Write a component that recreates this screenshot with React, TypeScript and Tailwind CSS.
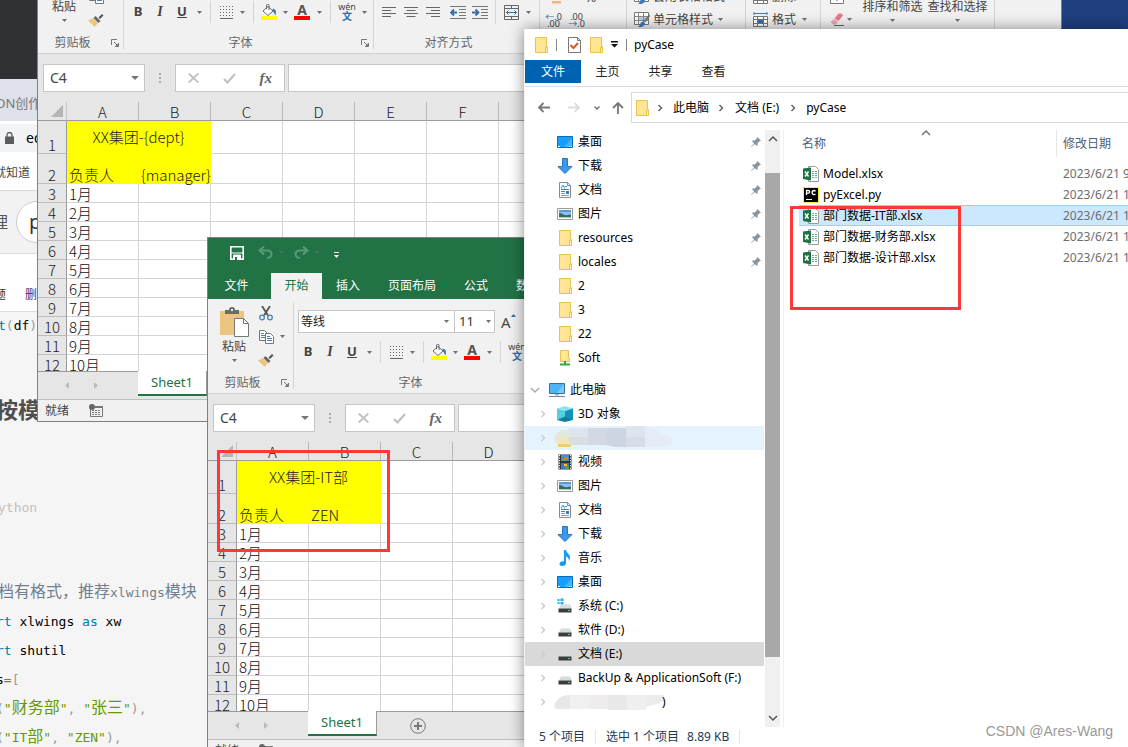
import type { ReactNode } from "react";
import clsx from "clsx";

const UI_FONT = "font-['Noto_Sans','Noto_Sans_CJK_SC',sans-serif]";
const SHEET_FONT = "font-['Noto_Sans_CJK_SC',sans-serif]";
const CODE_FONT = "font-['DejaVu_Sans_Mono','Noto_Sans_CJK_SC',monospace]";

const COLUMNS = ["A", "B", "C", "D", "E", "F", "G", "H", "I", "J", "K", "L", "M", "N"];
const MONTHS = ["1月", "2月", "3月", "4月", "5月", "6月", "7月", "8月", "9月", "10月"];

/* ---------- small shared icons ---------- */

function Caret({ className }: { className?: string }) {
  return (
    <svg width="5" height="3" viewBox="0 0 5 3" className={clsx("shrink-0", className)}>
      <path d="M0 0h5L2.5 3z" fill="#707070" />
    </svg>
  );
}

function FolderIcon() {
  return (
    <svg width="16" height="16" viewBox="0 0 16 16" className="shrink-0">
      <path d="M2.5.5h11v9h1v6h-12z" fill="#ffe594" stroke="#e8c34f" />
      <path d="M12.5 15V10.5h2V15" fill="#fff0b8" stroke="#e8c34f" />
    </svg>
  );
}

function NetFolderIcon() {
  return (
    <svg width="16" height="16" viewBox="0 0 16 16" className="shrink-0">
      <path d="M3.5.5h8v8h1v3h-9z" fill="#ffe594" stroke="#e8c34f" />
      <path d="M8 11v3M3 14.5h10" stroke="#2fae3f" strokeWidth="2" />
    </svg>
  );
}

function DesktopIcon() {
  return (
    <svg width="16" height="16" viewBox="0 0 16 16" className="shrink-0">
      <path d="M.5 2.5h15v11H.5z" fill="#1a9fff" stroke="#0a6ab6" />
      <path d="M7 13l8-9v9z" fill="#45b4ff" />
      <path d="M1 12.5h2M12 12.5h1M14 12.5h1" stroke="#fff" />
    </svg>
  );
}

function DownloadIcon() {
  return (
    <svg width="16" height="16" viewBox="0 0 16 16" className="shrink-0">
      <path d="M5.5.5h5v8h4.500L8 15.500.9 8.500h4.600z" fill="#3b97e8" stroke="#2577c2" />
    </svg>
  );
}

function DocumentIcon() {
  return (
    <svg width="16" height="16" viewBox="0 0 16 16" className="shrink-0">
      <path d="M2.500.5h8l3 3v12h-11z" fill="#fff" stroke="#8c8c8c" />
      <path d="M10.500.5v3h3" fill="none" stroke="#8c8c8c" />
      <path d="M4 6.500l1.500-3h1l1 3M8 4.500h2M4 7.500h8M4 9.500h4" stroke="#2c8bd2" fill="none" />
      <path d="M4 11.500h4M4 13.500h8" stroke="#9a9a9a" />
      <path d="M9 9h3v3H9z" fill="#3d7fb5" />
    </svg>
  );
}

function PictureIcon() {
  return (
    <svg width="16" height="16" viewBox="0 0 16 16" className="shrink-0">
      <path d="M.5 2.500h15v11H.5z" fill="#fff" stroke="#9a9a9a" />
      <path d="M2 4h12v8H2z" fill="#8dc3ee" />
      <path d="M2 4h12v2H2z" fill="#5b97d3" />
      <path d="M2 7c3 0 4 1.500 6 2s4-.5 6-.5V12H2z" fill="#3c6b5e" />
      <path d="M2 11h12v1H2z" fill="#a9cdb8" />
    </svg>
  );
}

function ComputerIcon() {
  return (
    <svg width="16" height="16" viewBox="0 0 16 16" className="shrink-0">
      <path d="M.5 1.500h15v10H.5z" fill="#4db5f5" stroke="#3a6f96" />
      <path d="M8 11l7-9v9z" fill="#7acbfa" />
      <path d="M6 12h4v1.500H6z" fill="#9fb4c4" />
      <path d="M0 14.500h16" stroke="#6f8799" />
    </svg>
  );
}

function CubeIcon() {
  return (
    <svg width="16" height="16" viewBox="0 0 16 16" className="shrink-0">
      <path d="M0 2.500L8 0l8 2.500L8 5z" fill="#8fe3ee" />
      <path d="M0 2.500L8 5v8l-8 1z" fill="#55cfe0" />
      <path d="M16 2.500L8 5v8l8 1z" fill="#1590bd" />
      <path d="M0 14l8-3.500 8 3.500-8 2z" fill="#0f7f9c" />
    </svg>
  );
}

function VideoIcon() {
  return (
    <svg width="16" height="16" viewBox="0 0 16 16" className="shrink-0">
      <path d="M1.500.5h13v15h-13z" fill="#333" />
      <path d="M2.500 1v14M13.500 1v14" stroke="#fff" strokeDasharray="1.200 1.300" />
      <path d="M4 1h8v6H4z" fill="#4f86dd" />
      <path d="M4 9h8v6H4z" fill="#3f74cf" />
      <path d="M7 3h4v3H7z" fill="#e0792c" />
      <path d="M5 5h3v2H5z" fill="#4caf50" />
      <path d="M7 10h3v2H7z" fill="#f2c233" />
      <path d="M8 12h4v3H8z" fill="#5f9e42" />
    </svg>
  );
}

function MusicIcon() {
  return (
    <svg width="16" height="16" viewBox="0 0 16 16" className="shrink-0">
      <path d="M7 0h2c.3 3 4 3.500 4 7.500 0 1-.4 2.500-1 3.500 0-3-1.500-4-3-4.500V13c0 2-1.800 3-3.700 3S2.500 15.200 2.500 14c0-1.700 2-3 4.500-2.600z" fill="#149bf3" />
    </svg>
  );
}

function DriveIcon({ system }: { system?: boolean }) {
  return (
    <svg width="16" height="16" viewBox="0 0 16 16" className="shrink-0">
      <path d="M4 6.500h9l2 4H2z" fill="#d8dadd" />
      <path d="M1.500 10.500h13v4h-13z" fill="#3a3d40" />
      <path d="M11 12h2v1h-2z" fill="#4be04b" />
      {system && (
        <>
          <path d="M0 0h7v7H0z" fill="#fff" />
          <path d="M.5 1h2v2h-2zM3.500.5h3V3h-3zM.5 4h2v2h-2zM3.500 4h3v2.500h-3z" fill="#19b2ef" />
        </>
      )}
    </svg>
  );
}

function ExcelFileIcon() {
  return (
    <svg width="16" height="16" viewBox="0 0 16 16" className="shrink-0">
      <path d="M5.500.5h7l3 3v12h-10z" fill="#fff" stroke="#9b9b9b" />
      <path d="M9 5.500h2M12 5.500h2M9 7.500h2M12 7.500h2M9 9.500h2M12 9.500h2M9 11.500h2M12 11.500h2" stroke="#6fa986" />
      <path d="M0 2.500L8 1.500v13L0 13z" fill="#1f7244" />
      <path d="M2 5.500l3.500 5M5.500 5.500L2 10.500" stroke="#fff" strokeWidth="1.400" />
    </svg>
  );
}

function PyCharmIcon() {
  return (
    <svg width="16" height="16" viewBox="0 0 16 16" className="shrink-0">
      <path d="M.5.5h15v15H.5z" fill="#000" stroke="#f0ef4e" />
      <path d="M3.500 8V3.500h1.800a1.300 1.300 0 010 2.700H3.500M12.500 4.300A2 2 0 0011 3.500c-1.200 0-1.900.9-1.900 2.100s.7 2.100 1.900 2.100a2 2 0 001.500-.8" fill="none" stroke="#fff" strokeWidth="1.300" />
      <path d="M3 12.500h6" stroke="#fff" />
    </svg>
  );
}

function PinIcon() {
  return (
    <svg width="10" height="10" viewBox="0 0 10 10" className="shrink-0">
      <path d="M6.300 0L10 3.700l-1 .6-.5-.1-2 2.100.1 1.900-.8.800-2.100-2.100L.3 10 0 9.700l3.100-3.400L1 4.200l.8-.8 2 .1 2-2-.2-.6z" fill="#8695a0" />
    </svg>
  );
}

/** Blurred-out name: a strip of soft grey blocks. */
function Mosaic({ tone }: { tone: "blue" | "grey" }) {
  const fills =
    tone === "blue"
      ? ["#e1ead8", "#dfe5ee", "#d3d9e4", "#cdd5e2", "#dde4ee", "#e4ecf8"]
      : ["#e6e8e8", "#f0f0f1", "#eeecec", "#e8e8e8", "#efefef", "#ebebeb"];
  return (
    <svg width="120" height="24" viewBox="0 -1 120 24" className={clsx("shrink-0", tone === "blue" && "-ml-[3px]")}>
      {tone === "blue" ? (
        <>
          <path d="M4 16h13v4H4z" fill="#f2cf62" />
          <path d="M1 8c2-4 6-5 14-5v14H4c-3-2-4-6-3-9z" fill={fills[0]} />
          <path d="M4 11h11v6H4z" fill="#f0e6b9" />
          <path d="M15 1h19v9H15z" fill={fills[1]} />
          <path d="M15 10h19v8H15z" fill="#d9dee0" />
          <path d="M34 1h19v17H34z" fill={fills[2]} />
          <path d="M53 1h19v19H61l-8-2z" fill={fills[3]} />
          <path d="M72-1h19v11H72z" fill={fills[4]} />
          <path d="M72 10h19v10H72z" fill="#d5dde9" />
          <path d="M91 0c8 0 14 3 17 8 8 0 12 4 9 9-2 3-14 3-26 3z" fill={fills[5]} />
        </>
      ) : (
        <>
          <path d="M1 12c4-6 8-8 15-8v14H3c-3-1-3-4-2-6z" fill={fills[0]} />
          <path d="M16 4h19v14H16z" fill={fills[1]} />
          <path d="M35 4h19v14H35z" fill={fills[2]} />
          <path d="M54 4h19v15H54z" fill={fills[3]} />
          <path d="M73 4h19v15H73z" fill={fills[4]} />
          <path d="M92 4h17c2 4 0 8-6 9l-11 3z" fill={fills[5]} />
        </>
      )}
    </svg>
  );
}

/* ---------- browser page in the back ---------- */

function Zh({ children }: { children: ReactNode }) {
  return <span className="text-base leading-5">{children}</span>;
}

function BrowserWindow() {
  return (
    <div className={clsx("flex h-full flex-col bg-[#f5f5f5] whitespace-nowrap", UI_FONT)}>
      <div className="h-[79px] shrink-0 bg-[#303134]" />
      <div className="flex h-[42px] shrink-0 items-center bg-[#dee1e9] pt-2 text-[13px] text-[#777]">
        <span className="-ml-1">DN创作</span>
      </div>
      <div className="flex h-[34px] shrink-0 items-center bg-white py-1">
        <div className="flex h-7 w-full items-center bg-[#f1f3f4] pl-[5px] text-sm">
          <svg width="9" height="12" viewBox="0 0 9 12">
            <path d="M0 4.500h9V12H0z" fill="#5a5d61" />
            <path d="M2 5V3a2.500 2.500 0 015 0v2" fill="none" stroke="#5a5d61" strokeWidth="1.300" />
          </svg>
          <span className="ml-3">editor</span>
        </div>
      </div>
      <div className="flex h-9 shrink-0 items-center border-b border-[#d8d8d8] bg-white text-xs text-[#444]">
        <span className="-ml-1.5">就知道</span>
      </div>
      <div className="flex h-[63px] shrink-0 items-center border-b border-[#ddd] bg-[#f2f2f2] text-base text-[#555]">
        <span className="-ml-2">理</span>
        <div className="ml-2 flex h-[42px] w-24 items-center rounded-full border border-[#ccc] bg-white pl-3 text-xl text-[#333]">p</div>
      </div>
      <div className="flex h-[58px] shrink-0 items-end border-b border-[#ddd] bg-white pb-2 text-xs">
        <span className="-ml-1.5 text-[#333]">题</span>
        <span className="ml-[19px] text-[#5a2a6e]">删除</span>
      </div>
      <pre className={clsx("flex-1 pt-1 text-[13px] text-black", CODE_FONT)}>
        <div className="-ml-0.5 leading-5">
          <span className="text-[#07a]">t</span>
          <span className="text-[#999]">(</span>df<span className="text-[#999]">)</span>
        </div>
        <h2 className={clsx("mt-[53px] -ml-1 text-[22px] leading-10 font-bold text-[#4f4f4f]", UI_FONT)}>按模板</h2>
        <div className="mt-[69px] -ml-0.5 leading-5 text-[#c5c0c0]">ython</div>
        <div className="mt-[60px] leading-[29px]">
          <div className="-ml-0.5 text-[#708090]">
            <Zh>档有格式，推荐</Zh>xlwings<Zh>模块</Zh>
          </div>
          <div className="-ml-1">
            <span className="text-[#07a]">rt</span> xlwings <span className="text-[#07a]">as</span> xw
          </div>
          <div className="-ml-1">
            <span className="text-[#07a]">rt</span> shutil
          </div>
          <div className="-ml-1">
            s<span className="text-[#9a6e3a]">=</span>
            <span className="text-[#999]">[</span>
          </div>
          <div className="-ml-1 text-[#999]">
            (<span className="text-[#690]">"<Zh>财务部</Zh>"</span>, <span className="text-[#690]">"<Zh>张三</Zh>"</span>),
          </div>
          <div className="-ml-1 text-[#999]">
            (<span className="text-[#690]">"IT<Zh>部</Zh>"</span>, <span className="text-[#690]">"ZEN"</span>),
          </div>
        </div>
      </pre>
    </div>
  );
}

/* ---------- Excel ---------- */

function RibbonGroup({
  label,
  launcher,
  className,
  children,
}: {
  label: string;
  launcher?: boolean;
  className: string;
  children: ReactNode;
}) {
  return (
    <>
      <section className={clsx("flex shrink-0 flex-col", className)}>
        <div className="h-[74px]">{children}</div>
        <div className="flex h-5 items-center text-xs text-[#666]">
          <span className="flex-1 pr-1 text-center">{label}</span>
          {launcher && (
            <button type="button" aria-label={`${label}设置`} className="mr-1">
              <svg width="8" height="8" viewBox="0 0 8 8" fill="none" stroke="#777">
                <path d="M.5 6V.5H6M3 3l3 3M4 7.500h3.500V4" />
                <path d="M4.500 7h3V4z" fill="#777" stroke="none" />
              </svg>
            </button>
          )}
        </div>
      </section>
      <div className="my-1 w-px shrink-0 bg-[#d4d4d4]" />
    </>
  );
}

function IconButton({ label, className, children }: { label: string; className?: string; children: ReactNode }) {
  return (
    <button type="button" aria-label={label} className={clsx("flex shrink-0 items-center justify-center", className)}>
      {children}
    </button>
  );
}

function MenuCaret({ label }: { label: string }) {
  return (
    <IconButton label={`${label}选项`} className="h-6 w-3">
      <Caret />
    </IconButton>
  );
}

function AlignIcon({ side }: { side: "left" | "center" | "right" }) {
  const d = {
    left: "M0 .5h14M0 3.500h9M0 6.500h14M0 9.500h9",
    center: "M0 .5h14M2.500 3.500h9M0 6.500h14M2.500 9.500h9",
    right: "M0 .5h14M5 3.500h9M0 6.500h14M5 9.500h9",
  }[side];
  return (
    <svg width="14" height="10" viewBox="0 0 14 10">
      <path d={d} stroke="#666" />
    </svg>
  );
}

function IndentIcon({ increase }: { increase?: boolean }) {
  return (
    <svg width="16" height="13" viewBox="0 0 16 13">
      <path d="M0 .5h16M9 3.500h7M9 6.500h7M9 9.500h7M0 12.500h16" stroke="#777" />
      {increase ? (
        <path d="M0 6.500h6M3.500 3.500l3 3-3 3" stroke="#2f6ea8" strokeWidth="1.800" fill="none" />
      ) : (
        <path d="M7 6.500H1.500M4 3.500l-3 3 3 3" stroke="#2f6ea8" strokeWidth="1.800" fill="none" />
      )}
    </svg>
  );
}

function StyleIcon() {
  return (
    <svg width="16" height="16" viewBox="0 0 16 16">
      <path d="M.5.5h14v12H.5z" fill="#fff" stroke="#777" />
      <path d="M4 4h10v5H4z" fill="#b9cfe6" />
      <path d="M.5 4.500h14M.5 8.500h14M4.500.5v12M9.500.5v12" stroke="#888" fill="none" />
      <path d="M15.500 2l-6 7 1.500 1.500 5-6z" fill="#777" />
      <path d="M4 15c3 .5 7-.5 7-4L9 9.500c-3 0-2.500 4-5 5.500z" fill="#3d7ab8" />
    </svg>
  );
}

function FormatCellsIcon() {
  return (
    <svg width="15" height="16" viewBox="0 0 15 16">
      <path d="M1 1.500h13M1 0v3M14 0v3" stroke="#3d7ab8" />
      <path d="M.5 4.500h14v10H.5zM.5 7.500h14M.5 11.500h14M4.500 4.500v10M10.500 4.500v10" stroke="#777" fill="#fff" />
      <path d="M5 8h5v3H5z" fill="#2f6ea8" />
    </svg>
  );
}

function Ribbon() {
  return (
    <div className="flex h-[95px] border-b border-[#d2d2d2] bg-[#f1f1f1] text-xs text-[#444]">
      <RibbonGroup label="剪贴板" launcher className="w-[85px]">
        <div className="flex pl-0.5">
          <button type="button" className="flex w-12 flex-col items-center pt-2">
            <svg width="29" height="30" viewBox="0 0 29 30">
              <path d="M0 4h24v24H0z" fill="#ecc680" />
              <path d="M5 7V3h4a3 3 0 016 0h4v4z" fill="#6b6b6b" />
              <path d="M11 2h2v2h-2z" fill="#f1f1f1" />
              <path d="M14.500 11.500h9l5 5v13h-14z" fill="#fff" stroke="#777" />
              <path d="M23.500 11.500v5h5" fill="none" stroke="#777" />
            </svg>
            <span className="leading-5">粘贴</span>
            <Caret className="mt-0.5" />
          </button>
          <div className="flex flex-col pt-0.5">
            <IconButton label="剪切" className="h-6 w-4">
              <svg width="14" height="15" viewBox="0 0 14 15" fill="none">
                <path d="M3 0l6 9.500M11 0L5 9.500" stroke="#555" strokeWidth="1.800" />
                <circle cx="3" cy="11.500" r="2.300" stroke="#4a7fb5" strokeWidth="1.300" />
                <circle cx="11" cy="11.500" r="2.300" stroke="#4a7fb5" strokeWidth="1.300" />
              </svg>
            </IconButton>
            <div className="flex h-[23px] items-center">
              <IconButton label="复制" className="w-4">
                <svg width="15" height="14" viewBox="0 0 15 14">
                  <path d="M.5.5h5l3 3v7h-8z" fill="#fff" stroke="#777" />
                  <path d="M2 3.500h3M2 5.500h4M2 7.500h4" stroke="#4a7fb5" />
                  <path d="M6.500 3.500h5l3 3v7h-8z" fill="#fff" stroke="#777" />
                  <path d="M8 6.500h3M8 8.500h5M8 10.500h5" stroke="#4a7fb5" />
                </svg>
              </IconButton>
              <Caret className="ml-1.5" />
            </div>
            <IconButton label="格式刷" className="h-[23px] w-4">
              <svg width="16" height="14" viewBox="0 0 16 14">
                <path d="M0 7.500l5-2.500 5 5-3.500 4z" fill="#ecc680" />
                <path d="M5.500 5l2-2 5 5-2 2z" fill="#666" />
                <path d="M10.500 4.500L14 1l1.500 1.500L12 6z" fill="#555" />
              </svg>
            </IconButton>
          </div>
        </div>
      </RibbonGroup>

      <RibbonGroup label="字体" launcher className="w-[249px]">
        <div className="flex flex-col gap-[7px] pt-[11px]">
          <div className="flex h-[23px] items-center pl-1">
            <div className="relative">
              <select aria-label="字体名称" className="h-[23px] w-[157px] appearance-none border border-[#c6c6c6] bg-white pl-0.5 text-xs text-[#222]">
                <option>等线</option>
              </select>
              <Caret className="pointer-events-none absolute top-2.5 right-1.5" />
            </div>
            <div className="relative">
              <select aria-label="字号" className="h-[23px] w-10 appearance-none border border-l-0 border-[#c6c6c6] bg-white pl-1 text-[13px] text-[#333]">
                <option>11</option>
              </select>
              <Caret className="pointer-events-none absolute top-2.5 right-1" />
            </div>
            <IconButton label="增大字号" className="ml-1.5">
              <span className="text-[15px] text-[#444]">A</span>
              <svg width="5" height="3" viewBox="0 0 5 3" className="mb-3">
                <path d="M0 3h5L2.500 0z" fill="#2f6ea8" />
              </svg>
            </IconButton>
          </div>
          <div className="flex h-6 items-center pl-[3px]">
            <IconButton label="加粗" className="w-[22px] text-[13px] font-bold">B</IconButton>
            <IconButton label="倾斜" className="w-[22px] font-['Liberation_Serif',serif] text-sm font-bold italic">I</IconButton>
            <IconButton label="下划线" className="w-[22px] text-[13px] font-bold underline">U</IconButton>
            <MenuCaret label="下划线" />
            <div className="mx-[5px] h-[22px] w-px bg-[#d4d4d4]" />
            <IconButton label="边框" className="w-5">
              <svg width="13" height="13" viewBox="0 0 13 13" stroke="#666">
                <path d="M0 .5h13M0 6.500h13M.5 0v12M6.500 0v12M12.500 0v12M0 3.500h13M0 9.500h13" strokeDasharray="1 2" />
                <path d="M0 12.500h13" />
              </svg>
            </IconButton>
            <MenuCaret label="边框" />
            <div className="mx-[5px] h-[22px] w-px bg-[#d4d4d4]" />
            <IconButton label="填充颜色" className="w-5">
              <svg width="16" height="16" viewBox="0 0 16 16">
                <path d="M2 7l5-4.500L12 7l-5 4.500z" fill="#fff" stroke="#666" />
                <path d="M5.500 5V1.500a1.200 1.200 0 012.500 0V6" fill="none" stroke="#666" />
                <path d="M12 4.500c3 1 4 4 2 7-.5-2.500-1.500-4-3-4.500z" fill="#3d7ab8" />
                <path d="M0 12h16v4H0z" fill="#ff0" />
              </svg>
            </IconButton>
            <MenuCaret label="填充颜色" />
            <IconButton label="字体颜色" className="w-[22px] flex-col">
              <span className="text-sm leading-3 font-bold text-[#555]">A</span>
              <span className="h-1 w-4 bg-[#f00]" />
            </IconButton>
            <MenuCaret label="字体颜色" />
            <div className="mx-[5px] h-[22px] w-px bg-[#d4d4d4]" />
            <IconButton label="拼音指南" className="w-[22px] flex-col">
              <span className="text-[9px] leading-2">wén</span>
              <span className="text-[10px] leading-2.5 font-bold text-[#2f6ea8]">文</span>
            </IconButton>
            <MenuCaret label="拼音指南" />
          </div>
        </div>
      </RibbonGroup>

      <RibbonGroup label="对齐方式" launcher className="w-[165px]">
        <div className="flex h-full items-end pb-[9px] pl-1">
          <IconButton label="左对齐" className="h-6 w-[22px]">
            <AlignIcon side="left" />
          </IconButton>
          <IconButton label="居中" className="h-6 w-[22px]">
            <AlignIcon side="center" />
          </IconButton>
          <IconButton label="右对齐" className="h-6 w-[22px]">
            <AlignIcon side="right" />
          </IconButton>
          <IconButton label="减少缩进量" className="ml-[3px] h-6 w-[22px]">
            <IndentIcon />
          </IconButton>
          <IconButton label="增加缩进量" className="h-6 w-[22px]">
            <IndentIcon increase />
          </IconButton>
          <div className="mx-1 h-6 w-px bg-[#d4d4d4]" />
          <IconButton label="合并后居中" className="h-6 w-[22px]">
            <svg width="15" height="15" viewBox="0 0 15 15" fill="none">
              <path d="M.5.5h14v14H.5zM.5 3.500h14M.5 11.500h14M7.500.5v3M7.500 11.500v3" stroke="#666" />
              <path d="M2 7.500h11M4.500 5.500l-2 2 2 2M10.500 5.500l2 2-2 2" stroke="#2f6ea8" />
            </svg>
          </IconButton>
          <MenuCaret label="合并后居中" />
        </div>
      </RibbonGroup>

      <RibbonGroup label="数字" launcher className="w-[86px]">
        <div className="flex h-full flex-col justify-end pb-0.5 pl-1">
          <div className="flex h-[23px] items-center">
            <IconButton label="会计数字格式" className="w-[23px]">
              <svg width="12" height="14" viewBox="0 0 12 14">
                <path d="M0 1h11v6H0z" fill="#8fb58f" />
                <path d="M1 8h10v2H1zM2 11h9v2.500H2z" fill="#ecb77a" />
              </svg>
            </IconButton>
            <IconButton label="百分比样式" className="ml-3 w-[23px] text-sm">%</IconButton>
          </div>
          <div className="flex h-[23px] items-center text-[9px] leading-[7px]">
            <IconButton label="增加小数位数" className="w-[19px] flex-col">
              <span><span className="text-[#2f6ea8]">←</span>.0</span>
              <span>.00</span>
            </IconButton>
            <IconButton label="减少小数位数" className="ml-1 w-[19px] flex-col">
              <span>.00</span>
              <span><span className="text-[#2f6ea8]">→</span>.0</span>
            </IconButton>
          </div>
        </div>
      </RibbonGroup>

      <RibbonGroup label="样式" className="w-[118px]">
        <div className="flex h-full flex-col justify-end pb-0.5 pl-[7px]">
          <button type="button" className="flex h-[23px] items-center gap-[3px]">
            <StyleIcon />
            套用表格格式
            <Caret className="ml-0.5" />
          </button>
          <button type="button" className="flex h-[23px] items-center gap-[3px]">
            <StyleIcon />
            单元格样式
            <Caret className="ml-0.5" />
          </button>
        </div>
      </RibbonGroup>

      <RibbonGroup label="单元格" className="w-[74px]">
        <div className="flex h-full flex-col justify-end pb-0.5 pl-[7px]">
          <button type="button" className="flex h-[23px] items-center gap-1">
            <FormatCellsIcon />
            删除
            <Caret className="ml-0.5" />
          </button>
          <button type="button" className="flex h-[23px] items-center gap-1">
            <FormatCellsIcon />
            格式
            <Caret className="ml-0.5" />
          </button>
        </div>
      </RibbonGroup>

      <RibbonGroup label="编辑" className="w-[173px]">
        <div className="flex h-full">
          <div className="flex w-[39px] flex-col justify-end pb-0.5 pl-2">
            <IconButton label="填充" className="h-[23px] w-4">
              <svg width="14" height="14" viewBox="0 0 14 14">
                <path d="M.5.5h13v13H.5z" fill="#fff" stroke="#777" />
                <path d="M7 3v6M4.500 7.500L7 10.500l2.500-3z" stroke="#2f6ea8" fill="#2f6ea8" />
              </svg>
            </IconButton>
            <div className="flex h-[23px] items-center">
              <IconButton label="清除" className="w-4">
                <svg width="14" height="13" viewBox="0 0 14 13">
                  <path d="M8.500.5h3l1.500 2-4.500 5.500-4-2.500z" fill="#e8788c" />
                  <path d="M4 6l4 3-2 2.500H3L.5 9z" fill="#f0a5b2" />
                  <path d="M4 12.500h10" stroke="#666" />
                </svg>
              </IconButton>
              <Caret className="ml-0.5" />
            </div>
          </div>
          <button type="button" className="flex w-[65px] flex-col items-center pt-[38px]">
            <span className="leading-5">排序和筛选</span>
            <Caret className="mt-0.5" />
          </button>
          <button type="button" className="flex w-[65px] flex-col items-center pt-[38px]">
            <span className="leading-5">查找和选择</span>
            <Caret className="mt-0.5" />
          </button>
        </div>
      </RibbonGroup>
    </div>
  );
}

function TitleBar() {
  return (
    <div className="h-[61px] bg-[#217346] text-white">
      <div className="flex h-[35px] items-center pb-1.5 pl-[22px]">
        <IconButton label="保存" className="h-7 w-3.5">
          <svg width="14" height="14" viewBox="0 0 14 14">
            <path d="M.8.8h12.400v12.400H.8z" fill="none" stroke="#fff" strokeWidth="1.600" />
            <path d="M1 7h12M3.500 9h7v4.500h-7z" stroke="#fff" fill="#fff" />
            <path d="M5 11h2v3H5z" fill="#217346" />
          </svg>
        </IconButton>
        <div className="flex items-center opacity-50">
          <svg width="15" height="13" viewBox="0 0 15 13" className="ml-3.5" fill="none" stroke="#8fc0a5" strokeWidth="2">
            <path d="M6 .5L1.500 4.500 6 8.500M2 4.500h7c6 0 6 7 0 7.500" />
          </svg>
          <Caret className="ml-1.5" />
          <svg width="15" height="13" viewBox="0 0 15 13" className="ml-2.5" fill="none" stroke="#8fc0a5" strokeWidth="2">
            <path d="M9 .5l4.500 4L9 8.500M13 4.500H6C0 4.500 0 11.500 6 12" />
          </svg>
          <Caret className="ml-1.5" />
        </div>
        <IconButton label="自定义快速访问工具栏" className="ml-3.5 pt-1">
          <svg width="5" height="6" viewBox="0 0 5 6">
            <path d="M0 0h5v1H0zM0 3h5L2.500 6z" fill="#fff" />
          </svg>
        </IconButton>
      </div>
      <div role="tablist" className="flex h-[26px] items-stretch text-xs">
        <button type="button" role="tab" className="w-[63px] pr-1.5">文件</button>
        <button type="button" role="tab" aria-selected="true" className="w-[51px] bg-[#f1f1f1] text-[#217346]">开始</button>
        {["插入", "页面布局", "公式", "数据", "审阅", "视图"].map((t) => (
          <button key={t} type="button" role="tab" className="px-3.5">
            {t}
          </button>
        ))}
      </div>
    </div>
  );
}

function FormulaBar() {
  return (
    <div className="flex h-12 items-center pl-[5px]">
      <div className="flex h-7 w-[102px] items-center border border-[#c6c6c6] bg-white pr-[5px] pl-1.5">
        <input aria-label="名称框" defaultValue="C4" className="w-full min-w-0 text-sm text-[#444]" />
        <svg width="8" height="4" viewBox="0 0 8 4" className="shrink-0">
          <path d="M0 0h8L4 4z" fill="#777" />
        </svg>
      </div>
      <svg width="2" height="10" viewBox="0 0 2 10" className="mx-3.5">
        <path d="M0 0h2v2H0zM0 4h2v2H0zM0 8h2v2H0z" fill="#aaa" />
      </svg>
      <div className="flex h-7 w-[110px] shrink-0 items-center justify-around border border-[#c6c6c6] bg-white">
        <IconButton label="取消">
          <svg width="11" height="10" viewBox="0 0 11 10">
            <path d="M.7.5l9.600 9M10.300.5l-9.600 9" stroke="#c0c0c0" strokeWidth="1.800" />
          </svg>
        </IconButton>
        <IconButton label="输入">
          <svg width="13" height="11" viewBox="0 0 13 11">
            <path d="M1 6l3.500 3.500L12 1" stroke="#c0c0c0" strokeWidth="2.200" fill="none" />
          </svg>
        </IconButton>
        <button type="button" aria-label="插入函数" className="font-['Liberation_Serif',serif] text-[15px] font-bold text-[#666] italic">
          fx
        </button>
      </div>
      <input aria-label="编辑栏" className="ml-[3px] h-7 min-w-0 flex-1 border border-[#c6c6c6] bg-white px-1 text-sm" />
    </div>
  );
}

const ROW_HEAD = "border-r border-b border-r-[#9b9b9b] border-b-[#bdbdbd] bg-[#e6e6e6] p-0 text-center align-bottom font-light text-[#222]";
const CELL = "border-r border-b border-[#d4d4d4] bg-white p-0 pl-0.5 align-bottom whitespace-nowrap";
const YELLOW = "border-r border-b border-[#ff0] bg-[#ff0] p-0 text-[#222]";

function Sheet({ title, manager }: { title: string; manager: string }) {
  const rest = COLUMNS.slice(2);
  return (
    <div className={clsx("h-[269px] overflow-hidden text-[15px] leading-4 font-light text-[#111]", SHEET_FONT)}>
      <table className="w-[1037px] table-fixed border-separate border-spacing-0">
        <colgroup>
          <col className="w-[29px]" />
          {COLUMNS.map((c) => (
            <col key={c} className="w-[72px]" />
          ))}
        </colgroup>
        <thead>
          <tr className="h-[19px]">
            <td className="border-r border-b border-r-[#c6c6c6] border-b-[#9b9b9b] p-0">
              <svg width="12" height="12" viewBox="0 0 12 12" className="mr-[3px] ml-auto">
                <path d="M12 0v12H0z" fill="#b4b4b4" />
              </svg>
            </td>
            {COLUMNS.map((c) => (
              <th key={c} className="border-r border-b border-r-[#b8b8b8] border-b-[#9b9b9b] p-0 align-bottom font-light text-[#222]">
                {c}
              </th>
            ))}
          </tr>
        </thead>
        <tbody>
          <tr className="h-[33px]">
            <th className={ROW_HEAD}>1</th>
            <td colSpan={2} className={clsx(YELLOW, "text-center align-middle")}>{title}</td>
            {rest.map((c) => (
              <td key={c} className={CELL} />
            ))}
          </tr>
          <tr className="h-[30px]">
            <th className={ROW_HEAD}>2</th>
            <td className={clsx(YELLOW, "pl-0.5 align-bottom")}>负责人</td>
            <td className={clsx(YELLOW, "pl-0.5 align-bottom")}>{manager}</td>
            {rest.map((c) => (
              <td key={c} className={CELL} />
            ))}
          </tr>
          {MONTHS.map((m, i) => (
            <tr key={m} className="h-[19px]">
              <th className={ROW_HEAD}>{i + 3}</th>
              <td className={CELL}>{m}</td>
              {COLUMNS.slice(1).map((c) => (
                <td key={c} className={CELL} />
              ))}
            </tr>
          ))}
        </tbody>
      </table>
    </div>
  );
}

function ExcelWindow({ title, manager, className }: { title: string; manager: string; className: string }) {
  return (
    <div className={clsx("absolute w-[1025px] overflow-hidden border border-[#808080] bg-[#e6e6e6] whitespace-nowrap", UI_FONT, className)}>
      <TitleBar />
      <Ribbon />
      <FormulaBar />
      <Sheet title={title} manager={manager} />
      <div className="flex h-[29px] border-t border-b border-t-[#9b9b9b] border-b-[#bdbdbd]">
        <div className="flex w-[100px] items-center gap-[25px] pl-[27px]">
          <svg width="4" height="7" viewBox="0 0 4 7"><path d="M4 0v7L0 3.500z" fill="#bbb" /></svg>
          <svg width="4" height="7" viewBox="0 0 4 7"><path d="M0 0v7l4-3.500z" fill="#bbb" /></svg>
        </div>
        <button type="button" className="-mt-px h-[25px] w-[69px] border-r border-b-2 border-r-[#9b9b9b] border-b-[#217346] bg-white text-[13px] text-[#217346]">
          Sheet1
        </button>
        <IconButton label="新工作表" className="ml-[33px]">
          <svg width="16" height="16" viewBox="0 0 16 16" fill="none" stroke="#777">
            <circle cx="8" cy="8" r="7.300" />
            <path d="M8 4v8M4 8h8" strokeWidth="2" />
          </svg>
        </IconButton>
      </div>
      <div className="flex h-[21px] items-center bg-[#f1f1f1] pl-[7px] text-xs text-[#444]">
        就绪
        <svg width="14" height="13" viewBox="0 0 14 13" className="ml-5">
          <path d="M1.500 5v7.500h12v-10H7" fill="none" stroke="#777" />
          <path d="M6 2h8v2H6z" fill="#777" />
          <path d="M3 6.500h9M3 8.500h9M3 10.500h9" stroke="#777" strokeDasharray="2 1" />
          <circle cx="3" cy="3" r="3" fill="#666" />
        </svg>
      </div>
    </div>
  );
}

/* ---------- Explorer ---------- */

interface NavEntry {
  id: string;
  label: ReactNode;
  icon: ReactNode;
  pinned?: boolean;
  state?: "hover" | "selected";
}

const QUICK_ACCESS: NavEntry[] = [
  { id: "q-desktop", label: "桌面", icon: <DesktopIcon />, pinned: true },
  { id: "q-download", label: "下载", icon: <DownloadIcon />, pinned: true },
  { id: "q-docs", label: "文档", icon: <DocumentIcon />, pinned: true },
  { id: "q-pics", label: "图片", icon: <PictureIcon />, pinned: true },
  { id: "q-res", label: "resources", icon: <FolderIcon />, pinned: true },
  { id: "q-loc", label: "locales", icon: <FolderIcon />, pinned: true },
  { id: "q-2", label: "2", icon: <FolderIcon /> },
  { id: "q-3", label: "3", icon: <FolderIcon /> },
  { id: "q-22", label: "22", icon: <FolderIcon /> },
  { id: "q-soft", label: "Soft", icon: <NetFolderIcon /> },
];

const THIS_PC: NavEntry[] = [
  { id: "3d", label: "3D 对象", icon: <CubeIcon /> },
  { id: "hidden-folder", label: null, icon: <Mosaic tone="blue" />, state: "hover" },
  { id: "video", label: "视频", icon: <VideoIcon /> },
  { id: "pics", label: "图片", icon: <PictureIcon /> },
  { id: "docs", label: "文档", icon: <DocumentIcon /> },
  { id: "download", label: "下载", icon: <DownloadIcon /> },
  { id: "music", label: "音乐", icon: <MusicIcon /> },
  { id: "desktop", label: "桌面", icon: <DesktopIcon /> },
  { id: "c", label: "系统 (C:)", icon: <DriveIcon system /> },
  { id: "d", label: "软件 (D:)", icon: <DriveIcon /> },
  { id: "e", label: "文档 (E:)", icon: <DriveIcon />, state: "selected" },
  { id: "f", label: "BackUp & ApplicationSoft (F:)", icon: <DriveIcon /> },
];

const FILES = [
  { name: "Model.xlsx", date: "2023/6/21 9", icon: <ExcelFileIcon /> },
  { name: "pyExcel.py", date: "2023/6/21 1", icon: <PyCharmIcon /> },
  { name: "部门数据-IT部.xlsx", date: "2023/6/21 1", icon: <ExcelFileIcon />, selected: true },
  { name: "部门数据-财务部.xlsx", date: "2023/6/21 1", icon: <ExcelFileIcon /> },
  { name: "部门数据-设计部.xlsx", date: "2023/6/21 1", icon: <ExcelFileIcon /> },
];

function Chevron({ dir, className }: { dir: "right" | "down" | "up"; className?: string }) {
  const d = { right: "M3.500 2l3 3-3 3", down: "M1 3l4 4 4-4", up: "M1 7l4-4 4 4" }[dir];
  return (
    <svg width="10" height="10" viewBox="0 0 10 10" className={clsx("shrink-0", className)}>
      <path d={d} fill="none" stroke="currentColor" strokeWidth="1.500" />
    </svg>
  );
}

function NavRow({ entry, tree }: { entry: NavEntry; tree?: boolean }) {
  return (
    <li>
      <button
        type="button"
        aria-label={entry.label ? undefined : "文件夹"}
        className={clsx(
          "flex h-6 w-full items-center gap-[5px] overflow-hidden pr-[3px] text-left",
          tree ? "pl-[13px]" : "pl-8",
          entry.state === "hover" && "bg-[#e5f3ff]",
          entry.state === "selected" && "bg-[#d9d9d9]",
        )}
      >
        {tree && <Chevron dir="right" className="mr-1 text-[#ccc]" />}
        {entry.icon}
        {entry.label && <span className="flex-1">{entry.label}</span>}
        {entry.pinned && <PinIcon />}
      </button>
    </li>
  );
}

function ExplorerWindow() {
  return (
    <div
      className={clsx(
        "absolute top-[29px] right-0 bottom-0 left-[524px] flex flex-col border-l border-[#f3f3f3] bg-white text-xs whitespace-nowrap text-black shadow-[0_0_14px_rgba(0,0,0,0.45)]",
        UI_FONT,
      )}
    >
      <div className="flex h-[31px] items-center pl-2">
        <FolderIcon />
        <div className="ml-[7px] h-3 w-px bg-[#888]" />
        <svg width="13" height="16" viewBox="0 0 13 16" className="mr-[7px] ml-[11px]">
          <path d="M.5.5h9l3 3v12H.5z" fill="#fff" stroke="#777" />
          <path d="M9.500.5v3h3" fill="none" stroke="#777" />
          <path d="M2.500 8l3 3 4.500-5" fill="none" stroke="#e0592a" strokeWidth="2" />
        </svg>
        <FolderIcon />
        <svg width="7" height="7" viewBox="0 0 7 7" className="ml-[7px]">
          <path d="M0 0h7v1.500H0zM0 3h7L3.500 6.500z" fill="#111" />
        </svg>
        <div className="mr-[7px] ml-2 h-3 w-px bg-[#888]" />
        <h1>pyCase</h1>
      </div>

      <div className="flex h-[27px] border-b border-[#dadbdc] text-[#222]">
        <button type="button" className="h-[23px] w-14 bg-[#0063b1] text-white">文件</button>
        {["主页", "共享", "查看"].map((t) => (
          <button key={t} type="button" className="h-6 w-[53px]">
            {t}
          </button>
        ))}
      </div>

      <div className="flex h-[43px] pt-[5px] pb-[7px] pl-3">
        <div className="flex items-center text-[#777]">
          <IconButton label="后退" className="w-3.5">
            <svg width="12" height="11" viewBox="0 0 12 11" fill="none" stroke="currentColor" strokeWidth="1.800">
              <path d="M12 5.500H1M5.500 1L1 5.500 5.500 10" />
            </svg>
          </IconButton>
          <IconButton label="前进" className="ml-4 w-3.5 text-[#ddd]">
            <svg width="12" height="11" viewBox="0 0 12 11" fill="none" stroke="currentColor" strokeWidth="1.800">
              <path d="M0 5.500h11M6.500 1L11 5.500 6.500 10" />
            </svg>
          </IconButton>
          <IconButton label="最近浏览的位置" className="ml-2.5 w-3">
            <svg width="6" height="4" viewBox="0 0 6 4" fill="none" stroke="currentColor" strokeWidth="1.500">
              <path d="M.5.5L3 3 5.500.5" />
            </svg>
          </IconButton>
          <IconButton label="上移" className="ml-2 w-3.5">
            <svg width="12" height="12" viewBox="0 0 12 12" fill="none" stroke="currentColor" strokeWidth="1.800">
              <path d="M6 12V1M1 6l5-5 5 5" />
            </svg>
          </IconButton>
        </div>
        <div className="ml-1.5 flex flex-1 items-center border border-r-0 border-[#d9d9d9] pl-0.5">
          <FolderIcon />
          <Chevron dir="right" className="mx-[5px] text-[#666]" />
          <a href="#pc" className="mx-[3px]">此电脑</a>
          <Chevron dir="right" className="mx-1 text-[#666]" />
          <a href="#e" className="mx-[5px]">文档 (E:)</a>
          <Chevron dir="right" className="mx-1 text-[#666]" />
          <a href="#pycase" className="mx-1">pyCase</a>
        </div>
      </div>

      <div className="flex min-h-0 flex-1">
        <nav className="mr-px w-[239px] shrink-0 overflow-hidden">
          <ul>
            {QUICK_ACCESS.map((e) => (
              <NavRow key={e.id} entry={e} />
            ))}
          </ul>
          <ul className="mt-2">
            <li>
              <button type="button" className="flex h-6 w-full items-center gap-[5px] pl-[5px] text-left">
                <Chevron dir="down" className="mr-1 text-[#aaa]" />
                <ComputerIcon />
                此电脑
              </button>
            </li>
            {THIS_PC.map((e) => (
              <NavRow key={e.id} entry={e} tree />
            ))}
            <li className="flex h-6 items-center pl-[13px]">
              <Chevron dir="right" className="mr-1.5 text-[#ccc]" />
              <Mosaic tone="grey" />
              <span className="-ml-3">)</span>
            </li>
          </ul>
        </nav>

        <div className="flex w-[15px] shrink-0 flex-col items-center bg-[#f0f0f0] text-[#555]">
          <Chevron dir="up" className="mt-1 mb-0.5" />
          <div className="w-full flex-1 pt-[27px] pb-[54px]">
            <div className="h-full w-full bg-[#a8a8a8]" />
          </div>
          <Chevron dir="down" className="mt-0.5 mb-1" />
        </div>

        <div className="ml-[3px] flex-1 overflow-hidden border-l border-[#f0f0f0] pl-[15px]">
          <table className="w-full table-fixed border-separate border-spacing-0">
            <colgroup>
              <col className="w-[258px]" />
              <col />
            </colgroup>
            <thead>
              <tr className="text-left text-[#4c607a]">
                <th className="relative p-0 pb-[6px] font-normal">
                  <Chevron dir="up" className="absolute -top-0.5 left-[122px] text-[#777]" />
                  <div className="flex h-[27px] items-center border-r border-[#e5e5e5] pl-[3px]">名称</div>
                </th>
                <th className="p-0 pb-[6px] pl-1.5 font-normal">修改日期</th>
              </tr>
            </thead>
            <tbody>
              {FILES.map((f) => (
                <tr key={f.name} className={clsx("h-[21px]", f.selected && "bg-[#cce8ff]")}>
                  <td className={clsx("border-y p-0", f.selected ? "border-[#99d1ff]" : "border-transparent")}>
                    <div className="flex h-[19px] items-center gap-1 pl-1">
                      {f.icon}
                      {f.name}
                    </div>
                  </td>
                  <td className={clsx("overflow-hidden border-y p-0 pl-1.5 text-[#6d6d6d]", f.selected ? "border-[#99d1ff]" : "border-transparent")}>
                    {f.date}
                  </td>
                </tr>
              ))}
            </tbody>
          </table>
        </div>
      </div>

      <div className="flex h-5 items-center pl-3.5 text-[#1e395b]">
        <span>5 个项目</span>
        <div className="mx-2.5 h-3.5 w-px bg-[#e5e5e5]" />
        <span>选中 1 个项目</span>
        <span className="ml-2">8.89 KB</span>
        <div className="mx-2.5 h-3.5 w-px bg-[#e5e5e5]" />
      </div>

      <span className="absolute right-[15px] bottom-1.5 font-['Liberation_Sans',sans-serif] text-sm text-[#999]">CSDN @Ares-Wang</span>
    </div>
  );
}

export default function App() {
  return (
    <main className="relative h-screen overflow-hidden bg-[#1f3f7f]">
      <div className="absolute inset-y-0 left-0 w-[600px] overflow-hidden">
        <BrowserWindow />
      </div>
      <ExcelWindow title="XX集团-{dept}" manager="{manager}" className="top-[-103px] left-[37px]" />
      <ExcelWindow title="XX集团-IT部" manager="ZEN" className="top-[237px] left-[207px]" />
      <ExplorerWindow />
      <div className="pointer-events-none absolute top-[450px] left-[217px] h-[102px] w-[173px] border-3 border-[#fc3838]" />
      <div className="pointer-events-none absolute top-[206px] left-[790px] h-[104px] w-[171px] border-3 border-[#fc3838]" />
    </main>
  );
}
